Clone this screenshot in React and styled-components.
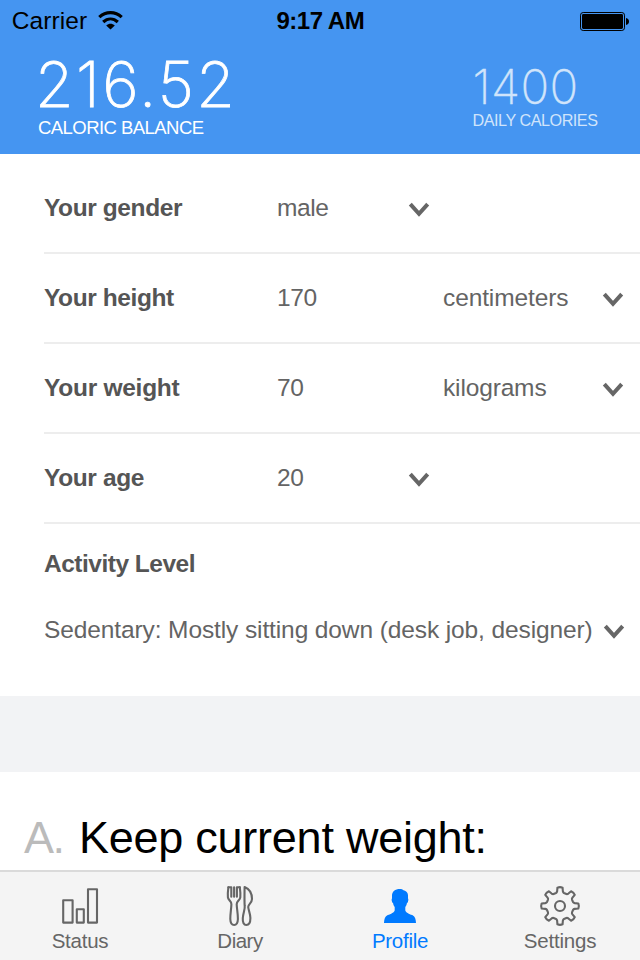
import React from "react";
import styled, { createGlobalStyle } from "styled-components";

const sans = `"Liberation Sans", Arial, sans-serif`;
const light = `Inter, "Liberation Sans", sans-serif`;

const GlobalStyle = createGlobalStyle`
  *, *::before, *::after { box-sizing: border-box; }
  body { margin: 0; background: #fff; font-family: ${sans}; }
  svg { display: block; overflow: visible; flex: none; }
`;

const Screen = styled.div`
  width: 640px;
  height: 960px;
  display: flex;
  flex-direction: column;
  overflow: hidden;
  white-space: nowrap;
`;

const Header = styled.header`
  flex: none;
  height: 154px;
  background: #4595f1;
`;

const StatusBar = styled.div`
  display: grid;
  grid-template-columns: 1fr auto 1fr;
  align-items: center;
  height: 40px;
  padding: 1px 11px 0 11.7px;
  font-size: 24.5px;
  line-height: 40px;
  color: #000;
`;

const Carrier = styled.div`
  display: flex;
  align-items: center;
  gap: 11px;
  letter-spacing: 0.1px;
`;

const Clock = styled.div`
  font-size: 24px;
  font-weight: 700;
  letter-spacing: -0.5px;
`;

const BatterySlot = styled.div`
  display: flex;
  justify-content: flex-end;
`;

const Figures = styled.div`
  display: flex;
  justify-content: space-between;
  padding: 11px 42.5px 0 35px;
  color: #fff;
`;

const Balance = styled.div`
  font: 200 62.5px/66px ${light};
  letter-spacing: 2.4px;
  -webkit-text-stroke: 0.8px currentColor;
`;

const BalanceLabel = styled.div`
  margin: 1px 0 0 3px;
  font-size: 18.5px;
  line-height: 20px;
  letter-spacing: -0.55px;
`;

const Daily = styled.div`
  padding-top: 11px;
  color: #d0e4fb;
`;

const DailyValue = styled.div`
  font: 200 47.5px/49px ${light};
  letter-spacing: 0.4px;
  -webkit-text-stroke: 0.3px currentColor;
`;

const DailyLabel = styled.div`
  font-size: 16.2px;
  line-height: 18px;
  letter-spacing: -0.48px;
`;

const Form = styled.section`
  flex: none;
  height: 542px;
  padding: 10px 0 0 44px;
  font-size: 24.5px;
  color: #646464;
`;

const Field = styled.div`
  display: grid;
  grid-template-columns: 233px 132px 34px 160px 20px;
  align-items: center;
  height: 90px;
  line-height: 88px;
  border-bottom: 2px solid #ededed;
`;

const Label = styled.div`
  font-weight: 700;
  letter-spacing: ${p => p.$spacing ?? -0.4}px;
  color: #555;
`;

const Value = styled.div`
  letter-spacing: ${p => p.$spacing ?? 0}px;
`;

const Activity = styled.div`
  display: flex;
  flex-direction: column;
  gap: 7px;
  padding-top: 14px;
  line-height: 52px;
`;

const ActivityChoice = styled.div`
  display: grid;
  grid-template-columns: 560px 20px;
  align-items: center;
  height: 66px;
  line-height: 66px;
  letter-spacing: -0.11px;
`;

const Divider = styled.div`
  flex: none;
  height: 76px;
  background: #f2f3f5;
`;

const Plan = styled.section`
  flex: 1;
  display: flex;
  padding: 39px 24px 0;
  font-size: 45px;
  line-height: 53px;
`;

const PlanLetter = styled.div`
  width: 55px;
  color: #bbb;
  letter-spacing: -1.5px;
`;

const PlanTitle = styled.div`
  color: #000;
  letter-spacing: -0.25px;
`;

const TabBar = styled.nav`
  flex: none;
  display: grid;
  grid-template-columns: repeat(4, 1fr);
  height: 90px;
  border-top: 2px solid #dadada;
  background: #f4f4f4;
`;

const Tab = styled.div`
  display: flex;
  flex-direction: column;
  align-items: center;
  padding-top: 14px;
  color: ${p => (p.$active ? "#007aff" : "#666")};
`;

const TabLabel = styled.span`
  margin-top: 3px;
  font-size: 20.5px;
  line-height: 24px;
  letter-spacing: ${p => p.$spacing}px;
`;

const WifiIcon = () => (
  <svg width="25" height="19" viewBox="0 0 25 19" fill="none" stroke="#000" strokeWidth="3.2">
    <path d="M1.3 5.2C7.8 -.9 17.2 -.9 23.7 5.2" />
    <path d="M5.2 10C9.6 6 15.4 6 19.8 10" />
    <path d="M8.2 13.6C10.9 11.1 14.1 11.1 16.8 13.6L12.5 17.6Z" fill="#000" stroke="none" />
  </svg>
);

const BatteryIcon = () => (
  <svg width="49" height="19" viewBox="0 0 49 19">
    <rect x=".5" y=".5" width="44" height="18" rx="2.7" fill="none" stroke="#000" />
    <rect x="2" y="2" width="41" height="15" rx="1.4" />
    <path d="M46 6Q49 6.6 49 9.5T46 13Z" />
  </svg>
);

const Chevron = () => (
  <svg width="20" height="16" viewBox="0 0 20 16" fill="none" stroke="#666" strokeWidth="4">
    <path d="M1.3 4.2L10 13.8L18.7 4.2" />
  </svg>
);

const ChartIcon = () => (
  <svg width="40" height="40" fill="none" stroke="currentColor" strokeWidth="2.1" strokeLinejoin="round">
    <rect x="3.2" y="14.2" width="9.4" height="22.4" />
    <rect x="16.8" y="23.2" width="7" height="13.4" />
    <rect x="28" y="3.2" width="9" height="33.4" />
  </svg>
);

const CutleryIcon = () => (
  <svg width="40" height="40" fill="none" stroke="currentColor" strokeWidth="2.1" strokeLinejoin="round" strokeLinecap="round">
    <path d="M8.4 1.2C7.9 5 7.6 8.5 7.9 11.4C8.2 14.2 11.6 15.2 11.4 18.2C11.3 22.5 10.2 28 10.3 33C10.4 37 11.9 39 14.1 39S17.8 37 17.9 33C18 28 16.8 22.5 16.7 18.2C16.6 15.2 20 14.2 20.3 11.4C20.6 8.5 20.3 5 19.8 1.2" />
    <path d="M8.4 1.2H11.3V10.8M14.1 1.2V10.8M19.8 1.2H16.9V10.8" />
    <path d="M24.6 1C29.5 3 32 8.1 32 13C32 17.2 27.9 18.3 28.2 21C28.5 24.2 30.4 28 30.4 32C30.4 36.5 28.7 39 26.3 39S22.5 36.5 22.8 32C23.1 27 25.2 23 24.7 20C24.4 17 24.5 7 24.6 1Z" />
  </svg>
);

const PersonIcon = () => (
  <svg width="40" height="40" fill="currentColor">
    <path d="M20 3C15 3 12 5.7 12 9.5V12.4C11.5 12.9 11.6 14.4 12 15.6C12.2 16.6 12.6 17 13.1 17.2C13.4 19 14 20.2 14.7 21V24.2C14.5 26.6 10.8 27.8 7.8 29.1C4.9 30.5 4.2 33 4 37H36C35.8 33 35.1 30.5 32.2 29.1C29.2 27.8 25.5 26.6 25.3 24.2V21C26 20.2 26.6 19 26.9 17.2C27.4 17 27.8 16.6 28 15.6C28.4 14.4 28.5 12.9 28 12.4V9.5C28 6 25.4 4.5 23.5 4.2C22.8 3.3 21.3 3 20 3Z" />
  </svg>
);

const gearPoint = (r, deg) => {
  const a = (deg * Math.PI) / 180;
  return `${(20 + r * Math.sin(a)).toFixed(2)} ${(20 - r * Math.cos(a)).toFixed(2)}`;
};

const gearPath =
  Array.from({ length: 8 }, (_, i) => {
    const a = i * 45;
    return `${i ? "L" : "M"}${gearPoint(13.6, a - 17)}Q${gearPoint(13.8, a - 13)} ${gearPoint(15, a - 11)}L${gearPoint(18.5, a - 8)}Q${gearPoint(19.4, a)} ${gearPoint(18.5, a + 8)}L${gearPoint(15, a + 11)}Q${gearPoint(13.8, a + 13)} ${gearPoint(13.6, a + 17)}`;
  }).join("") + "Z";

const GearIcon = () => (
  <svg width="40" height="40" fill="none" stroke="currentColor" strokeWidth="2.1" strokeLinejoin="round">
    <path d={gearPath} />
    <circle cx="20" cy="20" r="5" />
  </svg>
);

const fields = [
  { label: "Your gender", value: "male", valueSpacing: -0.4 },
  { label: "Your height", value: "170", valueSpacing: -0.4, unit: "centimeters", unitSpacing: -0.11 },
  { label: "Your weight", spacing: -0.27, value: "70", valueSpacing: -0.5, unit: "kilograms", unitSpacing: -0.15 },
  { label: "Your age", spacing: -0.38, value: "20", valueSpacing: -0.5 },
];

const tabs = [
  { label: "Status", Icon: ChartIcon, spacing: -0.25 },
  { label: "Diary", Icon: CutleryIcon, spacing: -0.5 },
  { label: "Profile", Icon: PersonIcon, spacing: -0.28, active: true },
  { label: "Settings", Icon: GearIcon, spacing: -0.2 },
];

export default function App() {
  return (
    <Screen>
      <GlobalStyle />
      <Header>
        <StatusBar>
          <Carrier>Carrier <WifiIcon /></Carrier>
          <Clock>9:17 AM</Clock>
          <BatterySlot><BatteryIcon /></BatterySlot>
        </StatusBar>
        <Figures>
          <div>
            <Balance>216.52</Balance>
            <BalanceLabel>CALORIC BALANCE</BalanceLabel>
          </div>
          <Daily>
            <DailyValue>1400</DailyValue>
            <DailyLabel>DAILY CALORIES</DailyLabel>
          </Daily>
        </Figures>
      </Header>
      <Form>
        {fields.map(f => (
          <Field key={f.label}>
            <Label $spacing={f.spacing}>{f.label}</Label>
            <Value $spacing={f.valueSpacing}>{f.value}</Value>
            {f.unit ? <span /> : <Chevron />}
            {f.unit && <Value $spacing={f.unitSpacing}>{f.unit}</Value>}
            {f.unit && <Chevron />}
          </Field>
        ))}
        <Activity>
          <Label $spacing={-0.5}>Activity Level</Label>
          <ActivityChoice>
            Sedentary: Mostly sitting down (desk job, designer)
            <Chevron />
          </ActivityChoice>
        </Activity>
      </Form>
      <Divider />
      <Plan>
        <PlanLetter>A.</PlanLetter>
        <PlanTitle>Keep current weight:</PlanTitle>
      </Plan>
      <TabBar>
        {tabs.map(({ label, Icon, spacing, active }) => (
          <Tab key={label} $active={active}>
            <Icon />
            <TabLabel $spacing={spacing}>{label}</TabLabel>
          </Tab>
        ))}
      </TabBar>
    </Screen>
  );
}
